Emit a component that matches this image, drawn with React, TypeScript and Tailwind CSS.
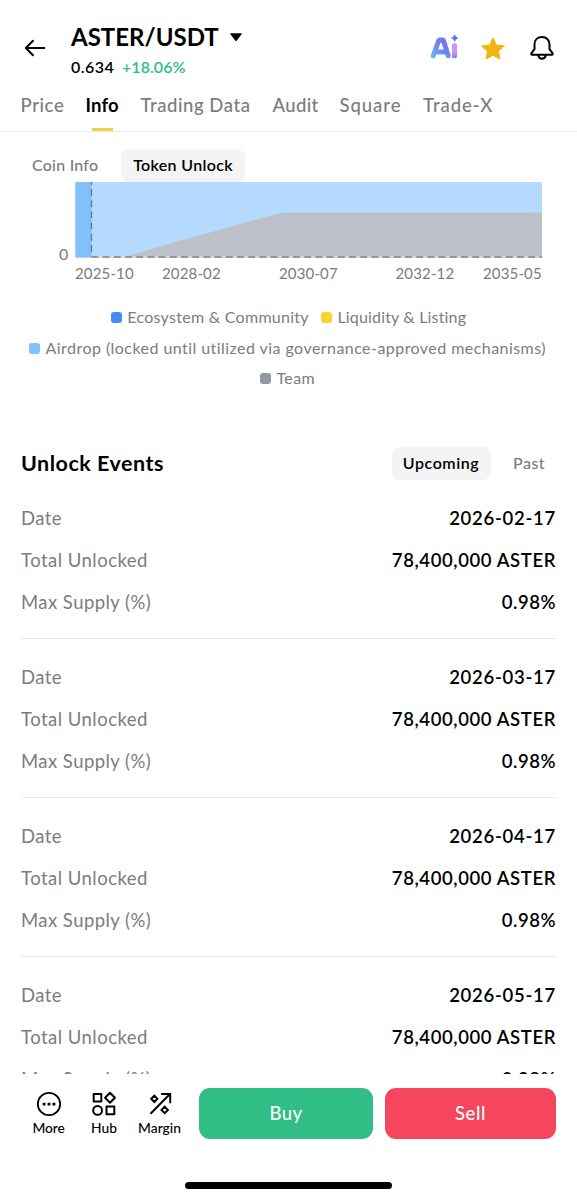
const tabs = [
  { label: "Price", style: "w-[44px] tracking-[0.6px]" },
  { label: "Info", style: "w-[34px] tracking-[0.2px]", active: true },
  { label: "Trading Data", style: "w-[111px] tracking-[0.55px]" },
  { label: "Audit", style: "w-[46px] tracking-[0.34px]" },
  { label: "Square", style: "w-[62.5px] tracking-[0.95px]" },
  { label: "Trade-X", style: "w-[72px] tracking-[0.95px]" },
];

const axisLabels = [
  { label: "2025-10", style: "left-0" },
  { label: "2028-02", style: "left-[87px]" },
  { label: "2030-07", style: "left-[204px]" },
  { label: "2032-12", style: "left-[320.5px]" },
  { label: "2035-05", style: "left-[408px]" },
];

const events = ["2026-02-17", "2026-03-17", "2026-04-17", "2026-05-17"];

function AiLogo() {
  return (
    <svg width="28" height="26" viewBox="0 0 28 26" fill="none">
      <defs>
        <linearGradient id="aiLetter" x1="0" y1="24" x2="16" y2="6" gradientUnits="userSpaceOnUse">
          <stop offset="0" stopColor="#62c6f6" />
          <stop offset="0.5" stopColor="#6f8df4" />
          <stop offset="1" stopColor="#7a6ff0" />
        </linearGradient>
        <linearGradient id="aiStem" x1="24" y1="9" x2="24" y2="24" gradientUnits="userSpaceOnUse">
          <stop offset="0" stopColor="#c795ea" />
          <stop offset="0.6" stopColor="#c99aeb" />
          <stop offset="1" stopColor="#8d7cf2" />
        </linearGradient>
      </defs>
      <path d="M3.2 21.8 L8.6 7 Q9 6.100 10 6.100H12.200Q13.200 6.100 13.600 7L18.200 21.800 M7.500 18H14.500" stroke="url(#aiLetter)" strokeWidth="5" strokeLinejoin="round" strokeLinecap="round" />
      <rect x="21.900" y="9.300" width="5.200" height="14.900" rx="1.600" fill="url(#aiStem)" />
      <path d="M24.700 .800 Q25.400 3.400 28 4.100 Q25.400 4.800 24.700 7.400 Q24 4.800 21.400 4.100 Q24 3.400 24.700 .800Z" fill="#5873e6" stroke="#5873e6" strokeWidth=".6" />
    </svg>
  );
}

function Header() {
  return (
    <header className="flex h-[84px] shrink-0 items-start pl-[24px]">
      <svg className="mt-[37px]" width="22" height="22" viewBox="0 0 22 22" fill="none" stroke="#000" strokeWidth="2" strokeLinecap="round" strokeLinejoin="round">
        <path d="M20.300 11H1.800M9 3.800 1.800 11 9 18.200" />
      </svg>
      <div className="ml-[25px] mt-[21px] flex w-[359px] flex-col">
        <div className="flex items-center">
          <h1 className="w-[150px] whitespace-nowrap text-[24px] leading-[32px] font-bold tracking-[0px]">ASTER/USDT</h1>
          <svg className="ml-[8px]" width="14" height="10" viewBox="0 0 14 10">
            <path d="M2 1.200H12Q13.500 1.200 12.400 2.600L7.800 8.400Q7 9.400 6.200 8.400L1.600 2.600Q.5 1.200 2 1.200Z" />
          </svg>
        </div>
        <div className="mt-[2px] flex gap-[7px] text-[16px] leading-[23px] font-semibold">
          <span className="w-[44px] tracking-[0.45px]">0.634</span>
          <span className="tracking-[0.050px] text-[#31bd86]">+18.06%</span>
        </div>
      </div>
      <div className="mt-[34px] flex">
        <AiLogo />
        <svg className="ml-[22px] mt-[2px]" width="26" height="26" viewBox="0 0 26 26" fill="#f2b410" stroke="#f2b410" strokeWidth="1.400" strokeLinejoin="round">
          <path d="m13 2.200 3.200 7 7.600.8-5.700 5.100 1.700 7.600L13 18.900l-6.800 3.800 1.700-7.600L2.200 10l7.600-.8Z" />
        </svg>
        <svg className="ml-[22.500px] mt-[1px]" width="26" height="26" viewBox="0 0 26 26" fill="none" stroke="#000" strokeWidth="2" strokeLinecap="round" strokeLinejoin="round">
          <path d="M13 2.100C8.300 2.100 5.500 5.300 5.500 9.500V14.200L2.500 18.100Q1.600 19.700 3.300 19.700H22.700Q24.400 19.700 23.500 18.100L20.500 14.200V9.500C20.500 5.300 17.700 2.100 13 2.100Z" />
          <path d="M9.300 20.300C9.700 22.400 11 23.800 13 23.800S16.300 22.400 16.700 20.300" />
        </svg>
      </div>
    </header>
  );
}

function Tabs() {
  return (
    <nav className="flex h-[48px] shrink-0 gap-[21px] border-b border-[#eeeeee] pl-[20.500px] text-[18.5px] leading-[42px] font-medium text-[#7c7c7c]">
      {tabs.map((tab) => (
        <div key={tab.label} className={`flex h-[47px] shrink-0 flex-col items-center justify-between whitespace-nowrap ${tab.style} ${tab.active ? "font-bold text-black" : ""}`}>
          <span className="w-full">{tab.label}</span>
          {tab.active && <span className="h-[3.500px] w-[21px] shrink-0 bg-[#f5d142]" />}
        </div>
      ))}
    </nav>
  );
}

function Chart() {
  return (
    <section className="flex shrink-0 flex-col text-[#7c7c7c]">
      <div className="flex h-[80px] pl-[59px] text-[16px] leading-[20px]">
        <span className="mt-[62px] w-[16px]">0</span>
        <svg width="468" height="78" viewBox="0 0 468 78">
          <path d="M.4 0H467V75.500H.4Z" fill="#b4daff" />
          <path d="M.4 0H16.500V75.500H.4Z" fill="#82c0fb" />
          <path d="M48 75.500 104 59 207 30.500H467V75.500Z" fill="#bcc1c9" />
          <path d="M16.500 0V75" stroke="#657584" strokeWidth="1.300" strokeDasharray="6.500 4.700" strokeDashoffset="4" />
          <path d="M16.500 75H467" stroke="#d7dade" strokeWidth="1.500" />
          <path d="M16.500 75H467" stroke="#7e8084" strokeWidth="1.500" strokeDasharray="6.800 4.400" />
        </svg>
      </div>
      <div className="relative ml-[75px] h-[23px] w-[467px] text-[15px] leading-[23px] tracking-[0.150px]">
        {axisLabels.map((axis) => (
          <span key={axis.label} className={`absolute top-0 whitespace-nowrap ${axis.style}`}>{axis.label}</span>
        ))}
      </div>
      <div className="mt-[17px] mr-[2px] flex flex-col items-center text-[16px] leading-[30.700px] whitespace-nowrap">
        <div className="ml-[2px] flex gap-[12px]">
          <span className="flex items-center gap-[5.500px] tracking-[0.280px]"><i className="h-[11px] w-[11px] rounded-[3px] bg-[#478df0]" />Ecosystem &amp; Community</span>
          <span className="flex items-center gap-[5.500px] tracking-[0.170px]"><i className="h-[11px] w-[11px] rounded-[3px] bg-[#f9d42d]" />Liquidity &amp; Listing</span>
        </div>
        <span className="flex items-center gap-[5.500px] tracking-[0.445px]"><i className="h-[11px] w-[11px] rounded-[3px] bg-[#82c1fc]" />Airdrop (locked until utilized via governance-approved mechanisms)</span>
        <span className="flex items-center gap-[5.500px] tracking-[0.370px]"><i className="h-[11px] w-[11px] rounded-[3px] bg-[#9199a5]" />Team</span>
      </div>
    </section>
  );
}

function EventCard({ date }: { date: string }) {
  return (
    <div className="h-[159px] shrink-0 border-b border-[#e9e9e9] pt-[16.500px] text-[18.5px] leading-[42px] text-[#7c7c7c]">
      <div className="flex justify-between"><span className="tracking-[0.400px]">Date</span><b className="font-semibold tracking-[0.720px] text-black">{date}</b></div>
      <div className="flex justify-between"><span className="tracking-[0.470px]">Total Unlocked</span><b className="font-semibold tracking-[0.600px] text-black">78,400,000 ASTER</b></div>
      <div className="flex justify-between"><span className="tracking-[0.450px]">Max Supply (%)</span><b className="font-semibold tracking-[0.550px] text-black">0.98%</b></div>
    </div>
  );
}

function BottomBar() {
  return (
    <footer className="flex h-[126px] shrink-0 flex-col items-center bg-white">
      <div className="flex w-full pt-[14px] pl-[27px] text-[13.800px] leading-[20px] font-medium">
        <div className="flex w-[43px] shrink-0 flex-col items-center pt-[2.500px]">
          <svg width="26" height="26" viewBox="0 0 26 26" fill="none" stroke="#000" strokeWidth="1.800">
            <circle cx="13" cy="13" r="11.200" />
            <path d="M6.700 11.700h2.800v2.800H6.700zM11.600 11.700h2.800v2.800h-2.800zM16.500 11.700h2.800v2.800h-2.800z" fill="#000" stroke="none" />
          </svg>
          <span className="mt-[1.500px] tracking-[-0.100px]">More</span>
        </div>
        <div className="ml-[12.500px] flex w-[43px] shrink-0 flex-col items-center pt-[2.500px]">
          <svg width="26" height="26" viewBox="0 0 26 26" fill="none" stroke="#000" strokeWidth="2" strokeLinejoin="round">
            <path d="M2.700 2.900h7.600v7.600H2.700zM15.500 15.500h7.800v7.800h-7.800zM19 1.800l4.900 5-4.900 5-4.900-5z" />
            <circle cx="6.600" cy="19.400" r="4.400" />
          </svg>
          <span className="mt-[1.500px]">Hub</span>
        </div>
        <div className="ml-[12px] flex w-[44px] shrink-0 flex-col items-center pt-[2.500px]">
          <svg width="26" height="26" viewBox="0 0 26 26" fill="none" stroke="#000" strokeWidth="2" strokeLinejoin="miter">
            <path d="M3.500 22.800 22.700 3.200M14 2.900h9.200v9.300M7.300 4.600l3.100 3.200-3.100 3.200-3.100-3.200zM17.700 15.700l3.200 3.200-3.200 3.200-3.200-3.200z" />
          </svg>
          <span className="mt-[1.500px]">Margin</span>
        </div>
        <button className="ml-[17.500px] h-[50.500px] w-[174px] shrink-0 rounded-[11px] bg-[#30be86] text-[18.5px] font-medium tracking-[0.400px] text-white">Buy</button>
        <button className="ml-[12px] h-[50.500px] w-[171px] shrink-0 rounded-[11px] bg-[#f5465d] text-[18.5px] font-medium tracking-[0.600px] text-white">Sell</button>
      </div>
      <div className="mt-[43.500px] h-[7px] w-[207px] rounded-full bg-black" />
    </footer>
  );
}

export default function App() {
  return (
    <div className="flex h-[1200px] w-[577px] flex-col overflow-hidden bg-white font-['Lato','Noto_Sans',sans-serif] text-black">
      <Header />
      <Tabs />
      <main className="flex min-h-0 flex-1 flex-col overflow-hidden">
        <div className="flex h-[50px] shrink-0 items-start pt-[17px] pl-[32px] text-[16px] leading-[32px] font-medium">
          <span className="w-[89px] tracking-[0.230px] text-[#7c7c7c]">Coin Info</span>
          <span className="h-[33px] w-[124px] rounded-[8px] bg-[#f4f4f4] text-center font-semibold tracking-[0.330px]">Token Unlock</span>
        </div>
        <Chart />
        <section className="mt-[53px] flex shrink-0 flex-col px-[21px]">
          <div className="flex h-[33px] items-center justify-between">
            <h2 className="text-[21.500px] font-bold tracking-[0.500px]">Unlock Events</h2>
            <div className="flex text-[16px] leading-[32.500px] font-medium">
              <span className="w-[99px] rounded-[8px] bg-[#f4f4f4] text-center font-semibold tracking-[0.560px]">Upcoming</span>
              <span className="w-[65.500px] pl-[22.500px] tracking-[0.500px] text-[#7c7c7c]">Past</span>
            </div>
          </div>
          {events.map((date) => (
            <EventCard key={date} date={date} />
          ))}
        </section>
      </main>
      <BottomBar />
    </div>
  );
}
